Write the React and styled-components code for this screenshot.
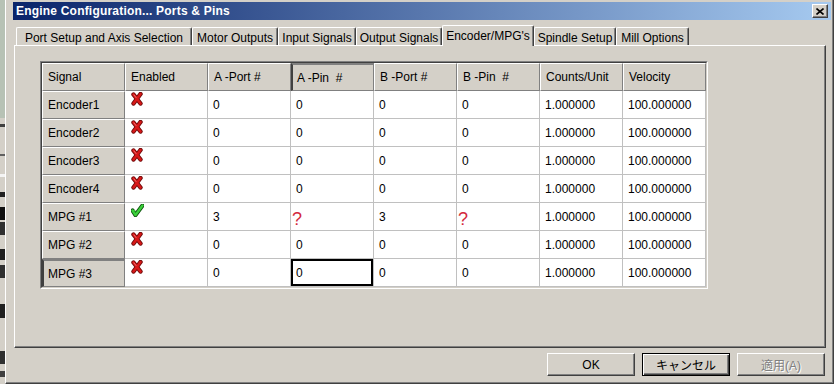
import React from 'react'
import styled, { createGlobalStyle, css } from 'styled-components'

const GlobalStyle = createGlobalStyle`
    html, body {
        margin: 0;
        padding: 0;
        background: #d4d0c8;
        overflow: hidden;
    }
    body {
        font-family: "Liberation Sans", "Noto Sans CJK JP", sans-serif;
        font-size: 12px;
        color: #000;
    }
`

const columns = ['Signal', 'Enabled', 'A -Port #', 'A -Pin  #', 'B -Port #', 'B -Pin  #', 'Counts/Unit', 'Velocity']

const rows = [
    { name: 'Encoder1', on: false, cells: ['0', '0', '0', '0'] },
    { name: 'Encoder2', on: false, cells: ['0', '0', '0', '0'] },
    { name: 'Encoder3', on: false, cells: ['0', '0', '0', '0'] },
    { name: 'Encoder4', on: false, cells: ['0', '0', '0', '0'] },
    { name: 'MPG #1', on: true, cells: ['3', '?', '3', '?'] },
    { name: 'MPG #2', on: false, cells: ['0', '0', '0', '0'] },
    { name: 'MPG #3', on: false, cells: ['0', '0', '0', '0'], current: true, focus: 1 },
]

const tabs = [
    { label: 'Port Setup and Axis Selection', w: 176 },
    { label: 'Motor Outputs', w: 86 },
    { label: 'Input Signals', w: 78 },
    { label: 'Output Signals', w: 86 },
    { label: "Encoder/MPG's", w: 92, active: true },
    { label: 'Spindle Setup', w: 82 },
    { label: 'Mill Options', w: 73 },
]

// stray bits of the window behind the dialog
const behind = [
    [118, '#b7c2b5'], [6, '#d4d0c8'], [3, '#404040'], [27, '#d4d0c8'], [2, '#606060'],
    [18, '#d4d0c8'], [3, '#f4f4f4'], [15, '#d4d0c8'], [5, '#202020'], [10, '#d4d0c8'],
    [13, '#101010'], [2, '#d4d0c8'], [13, '#303030'], [14, '#d4d0c8'], [11, '#202020'],
    [5, '#d4d0c8'], [13, '#303030'], [26, '#d4d0c8'], [14, '#202020'], [33, '#d4d0c8'],
    [13, '#303030'], [7, '#d4d0c8'], [6, '#404040'], [6, '#d4d0c8'],
]

const Screen = styled.div`
    display: flex;
    width: 834px;
    height: 384px;
`

const Behind = styled.div`
    width: 5px;
    display: flex;
    flex-direction: column;
`

const Chip = styled.div`
    flex: none;
    height: ${p => p.$h}px;
    background: ${p => p.$c};
`

const Window = styled.div`
    flex: 1;
    box-sizing: border-box;
    height: 384px;
    display: flex;
    flex-direction: column;
    background: #d4d0c8;
    border-left: 1px solid #fff;
    border-right: 1px solid #404040;
    border-bottom: 1px solid #404040;
    box-shadow: inset -1px -1px #808080;
    padding: 2px 2px 0 7px;
`

const TitleBar = styled.div`
    height: 18px;
    display: flex;
    align-items: center;
    justify-content: space-between;
    padding: 0 3px 0 3px;
    background: linear-gradient(to right, #0a246a, #a6caf0);
    color: #fff;
    font-weight: bold;
    font-size: 12px;
    letter-spacing: 0.2px;
`

const CloseButton = styled.div`
    width: 16px;
    height: 14px;
    box-sizing: border-box;
    background: #d4d0c8;
    border-top: 1px solid #fff;
    border-left: 1px solid #fff;
    border-right: 1px solid #404040;
    border-bottom: 1px solid #404040;
    box-shadow: inset -1px -1px #808080;
    display: flex;
    align-items: center;
    justify-content: center;
`

const TabStrip = styled.div`
    display: flex;
    align-items: flex-end;
    height: 20px;
    margin-top: 5px;
    padding-left: 3px;
`

const Tab = styled.div`
    position: relative;
    box-sizing: border-box;
    width: ${p => p.$w}px;
    height: ${p => (p.$active ? 21 : 18)}px;
    margin-bottom: ${p => (p.$active ? -1 : 0)}px;
    z-index: ${p => (p.$active ? 1 : 0)};
    display: flex;
    align-items: center;
    justify-content: center;
    padding-top: ${p => (p.$active ? 0 : 2)}px;
    background: #d4d0c8;
    border-top: 1px solid #fff;
    border-left: 1px solid #fff;
    border-right: 1px solid #404040;
    border-radius: 2px 2px 0 0;
    box-shadow: inset -1px 0 #808080;
    white-space: nowrap;
`

const Panel = styled.div`
    box-sizing: border-box;
    height: 303px;
    margin: 0 5px 0 1px;
    padding: 15px 0 0 25px;
    border-top: 1px solid #fff;
    border-left: 1px solid #fff;
    border-right: 1px solid #404040;
    border-bottom: 1px solid #404040;
    box-shadow: inset -1px -1px #808080;
`

const GridFrame = styled.div`
    display: inline-block;
    border-top: 1px solid #808080;
    border-left: 1px solid #808080;
    border-right: 1px solid #fff;
    border-bottom: 1px solid #fff;
`

const Grid = styled.div`
    display: grid;
    grid-template-columns: repeat(8, 83px);
    grid-auto-rows: 28px;
    border-top: 1px solid #404040;
    border-left: 1px solid #404040;
    border-right: 1px solid #d4d0c8;
    border-bottom: 1px solid #d4d0c8;
`

const raised = css`
    background: #d4d0c8;
    border-top: 1px solid #fff;
    border-left: 1px solid #fff;
    border-right: 1px solid #808080;
    border-bottom: 1px solid #808080;
`

const sunken = css`
    background: #d4d0c8;
    border-top: 2px solid #808080;
    border-left: 2px solid #404040;
    border-right: 1px solid #808080;
    border-bottom: 1px solid #808080;
`

const Cell = styled.div`
    box-sizing: border-box;
    display: flex;
    align-items: center;
    padding-left: ${p => (p.$pressed ? 4 : 5)}px;
    white-space: pre;
    overflow: hidden;
    ${p => (p.$kind === 'data'
        ? css`
            background: #fff;
            border-right: 1px solid #c0c0c0;
            border-bottom: 1px solid #c0c0c0;
            box-shadow: ${p.$focused ? 'inset 0 0 0 2px #000' : 'none'};
        `
        : p.$pressed ? sunken : raised)}
`

const IconCell = styled(Cell)`
    align-items: flex-start;
    padding: 1px 0 0 6px;
`

const Unknown = styled.span`
    color: #d42a3c;
    font-size: 18px;
    margin: 5px 0 0 -4px;
`

const ButtonRow = styled.div`
    display: flex;
    justify-content: flex-end;
    gap: 7px;
    margin: 5px 6px 0 0;
`

const Button = styled.div`
    box-sizing: border-box;
    width: 88px;
    height: 23px;
    display: flex;
    align-items: center;
    justify-content: center;
    background: #d4d0c8;
    color: ${p => (p.$disabled ? '#808080' : '#000')};
    text-shadow: ${p => (p.$disabled ? '1px 1px #fff' : 'none')};
    ${p => (p.$default
        ? css`
            border: 1px solid #000;
            box-shadow: inset 1px 1px #fff, inset -1px -1px #404040, inset -2px -2px #808080;
        `
        : css`
            border-top: 1px solid #fff;
            border-left: 1px solid #fff;
            border-right: 1px solid #404040;
            border-bottom: 1px solid #404040;
            box-shadow: inset -1px -1px #808080;
        `)}
`

function CrossIcon() {
    return (
        <svg width="12" height="14" viewBox="0 0 12 14">
            <path d="M2.5 2.5 L9.5 11.5 M9.5 2 L2.5 11.5" stroke="#6e0a0a" strokeWidth="4.4" strokeLinecap="round" fill="none" />
            <path d="M2.5 2.5 L9.5 11.5 M9.5 2 L2.5 11.5" stroke="#d81818" strokeWidth="2.6" strokeLinecap="round" fill="none" />
            <path d="M3 3 L5 5.5" stroke="#f07070" strokeWidth="1" strokeLinecap="round" />
        </svg>
    )
}

function CheckIcon() {
    return (
        <svg width="13" height="13" viewBox="0 0 13 13">
            <path d="M1.5 6.5 L4.5 11 L11.5 1.5" stroke="#0e4e0e" strokeWidth="4.2" strokeLinecap="round" strokeLinejoin="round" fill="none" />
            <path d="M1.5 6.5 L4.5 11 L11.5 1.5" stroke="#3ad03a" strokeWidth="2.4" strokeLinecap="round" strokeLinejoin="round" fill="none" />
            <path d="M2 6 L4 6 L5 8" fill="#3ad03a" />
        </svg>
    )
}

function App() {
    return (
        <Screen>
            <GlobalStyle />
            <Behind>
                {behind.map(([h, c], i) => <Chip key={i} $h={h} $c={c} />)}
            </Behind>
            <Window>
                <TitleBar>
                    <span>Engine Configuration... Ports &amp; Pins</span>
                    <CloseButton>
                        <svg width="8" height="7" viewBox="0 0 8 7">
                            <path d="M0.5 0.5 L7.5 6.5 M7.5 0.5 L0.5 6.5" stroke="#000" strokeWidth="1.6" />
                        </svg>
                    </CloseButton>
                </TitleBar>
                <TabStrip>
                    {tabs.map(t => (
                        <Tab key={t.label} $w={t.w} $active={t.active}>{t.label}</Tab>
                    ))}
                </TabStrip>
                <Panel>
                    <GridFrame>
                        <Grid>
                            {columns.map((c, i) => (
                                <Cell key={c} $kind="head" $pressed={i === 3}>{c}</Cell>
                            ))}
                            {rows.map(r => (
                                <React.Fragment key={r.name}>
                                    <Cell $kind="side" $pressed={r.current}>{r.name}</Cell>
                                    <IconCell $kind="data">{r.on ? <CheckIcon /> : <CrossIcon />}</IconCell>
                                    {r.cells.map((v, i) => (
                                        <Cell key={i} $kind="data" $focused={r.focus === i}>
                                            {v === '?' ? <Unknown>?</Unknown> : v}
                                        </Cell>
                                    ))}
                                    <Cell $kind="data">1.000000</Cell>
                                    <Cell $kind="data">100.000000</Cell>
                                </React.Fragment>
                            ))}
                        </Grid>
                    </GridFrame>
                </Panel>
                <ButtonRow>
                    <Button>OK</Button>
                    <Button $default>キャンセル</Button>
                    <Button $disabled>適用(A)</Button>
                </ButtonRow>
            </Window>
        </Screen>
    )
}

export default App
